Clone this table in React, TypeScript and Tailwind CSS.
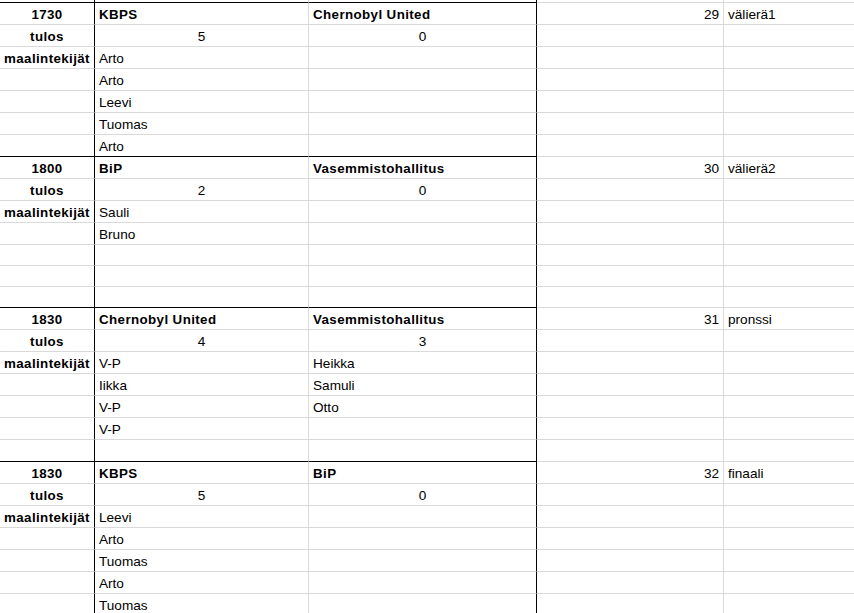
import React from 'react';

type Block = {
  time: string;
  home: string;
  away: string;
  no: number;
  stage: string;
  score: [number, number];
  homeScorers: string[];
  awayScorers: string[];
  heights: number[];
};

const blocks: Block[] = [
  {
    time: '1730',
    home: 'KBPS',
    away: 'Chernobyl United',
    no: 29,
    stage: 'välierä1',
    score: [5, 0],
    homeScorers: ['Arto', 'Arto', 'Leevi', 'Tuomas', 'Arto'],
    awayScorers: [],
    heights: [22, 22, 22, 22, 22, 22, 22],
  },
  {
    time: '1800',
    home: 'BiP',
    away: 'Vasemmistohallitus',
    no: 30,
    stage: 'välierä2',
    score: [2, 0],
    homeScorers: ['Sauli', 'Bruno'],
    awayScorers: [],
    heights: [22, 22, 22, 22, 21, 21, 21],
  },
  {
    time: '1830',
    home: 'Chernobyl United',
    away: 'Vasemmistohallitus',
    no: 31,
    stage: 'pronssi',
    score: [4, 3],
    homeScorers: ['V-P', 'Iikka', 'V-P', 'V-P'],
    awayScorers: ['Heikka', 'Samuli', 'Otto'],
    heights: [22, 22, 22, 22, 22, 22, 22],
  },
  {
    time: '1830',
    home: 'KBPS',
    away: 'BiP',
    no: 32,
    stage: 'finaali',
    score: [5, 0],
    homeScorers: ['Leevi', 'Arto', 'Tuomas', 'Arto', 'Tuomas'],
    awayScorers: [],
    heights: [22, 22, 22, 22, 22, 22, 22],
  },
];

// solu: teksti alas, kuten taulukkolaskimessa
const cell = 'flex items-end pb-[2px] px-[4px] leading-[15px] overflow-hidden whitespace-nowrap';
const bold = 'font-bold text-[13.33px] tracking-[0.4px]';

const Row: React.FC<{
  h: number;
  last: boolean;
  a?: React.ReactNode;
  b?: React.ReactNode;
  c?: React.ReactNode;
  d?: React.ReactNode;
  e?: React.ReactNode;
  bCenter?: boolean;
}> = ({ h, last, a, b, c, d, e, bCenter }) => {
  const dark = last ? 'border-b-black' : 'border-b-[#d9d9d9]';
  return (
    <div className="flex" style={{ height: h }}>
      <div className={`${cell} ${bold} w-[95px] shrink-0 justify-center border-b border-r border-r-black ${dark}`}>
        {a}
      </div>
      <div
        className={`${cell} w-[214px] shrink-0 border-b border-r border-r-[#d9d9d9] ${dark} ${bCenter ? 'justify-center' : ''}`}
      >
        {b}
      </div>
      <div
        className={`${cell} w-[228px] shrink-0 border-b border-r border-r-black ${dark} ${bCenter ? 'justify-center' : ''}`}
      >
        {c}
      </div>
      <div className={`${cell} w-[187px] shrink-0 justify-end border-b border-r border-[#d9d9d9]`}>{d}</div>
      <div className={`${cell} flex-1 border-b border-[#d9d9d9]`}>{e}</div>
    </div>
  );
};

const MatchBlock: React.FC<{ block: Block }> = ({ block }) => {
  const scorerRows = block.heights.slice(2).map((h, i) => (
    <Row
      key={i}
      h={h}
      last={i === block.heights.length - 3}
      a={i === 0 ? 'maalintekijät' : ''}
      b={block.homeScorers[i]}
      c={block.awayScorers[i]}
    />
  ));

  return (
    <>
      <Row
        h={block.heights[0]}
        last={false}
        a={block.time}
        b={<span className={bold}>{block.home}</span>}
        c={<span className={bold}>{block.away}</span>}
        d={block.no}
        e={block.stage}
      />
      <Row h={block.heights[1]} last={false} a="tulos" b={block.score[0]} c={block.score[1]} bCenter />
      {scorerRows}
    </>
  );
};

const App: React.FC = () => {
  return (
    <div
      className="h-[613px] w-[854px] overflow-hidden bg-white text-[13.6px] text-black"
      style={{ fontFamily: '"Liberation Sans", Arial, sans-serif' }}
    >
      {/* edellisen rivin alareuna */}
      <div className="flex h-[3px]">
        <div className="w-[95px] shrink-0 border-b border-r border-b-black border-r-black" />
        <div className="w-[214px] shrink-0 border-b border-r border-b-black border-r-[#d9d9d9]" />
        <div className="w-[228px] shrink-0 border-b border-r border-black" />
        <div className="w-[187px] shrink-0 border-b border-r border-[#d9d9d9]" />
        <div className="flex-1 border-b border-[#d9d9d9]" />
      </div>
      {blocks.map((block, i) => (
        <MatchBlock key={i} block={block} />
      ))}
    </div>
  );
};

export default App;
